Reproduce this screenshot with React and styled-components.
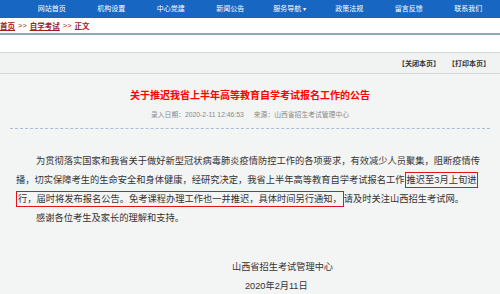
import React from "react";
import styled, { createGlobalStyle } from "styled-components";

const GlobalStyle = createGlobalStyle`
  html, body {
    margin: 0;
    padding: 0;
    background: #f3f4f4;
  }
  body {
    font-family: "Liberation Sans", "Noto Sans CJK SC", sans-serif;
    overflow: hidden;
  }
`;

const navItems = ["网站首页", "机构设置", "中心党建", "新闻公告", "服务导航", "政策法规", "留言反馈", "联系我们"];

const App = () => {
  return (
    <Page>
      <GlobalStyle />
      <Top>
        <Nav>
          {navItems.map((item) => (
            <NavItem key={item}>
              {item}
              {item === "服务导航" && <Caret>▾</Caret>}
            </NavItem>
          ))}
        </Nav>
        <Crumbs>
          <CrumbLink>首页</CrumbLink>
          <Sep>&gt;&gt;</Sep>
          <CrumbLink>自学考试</CrumbLink>
          <Sep>&gt;&gt;</Sep>
          <span>正文</span>
        </Crumbs>
      </Top>
      <Toolbar>
        <ToolBtn>【关闭本页】</ToolBtn>
        <ToolBtn>【打印本页】</ToolBtn>
      </Toolbar>
      <Article>
        <Title>关于推迟我省上半年高等教育自学考试报名工作的公告</Title>
        <Meta>
          录入日期：2020-2-11 12:46:53
          <MetaSource>来源：山西省招生考试管理中心</MetaSource>
        </Meta>
        <Divider />
        <Body>
          <Line $indent>为贯彻落实国家和我省关于做好新型冠状病毒肺炎疫情防控工作的各项要求，有效减少人员聚集，阻断疫情传</Line>
          <Line>
            播，切实保障考生的生命安全和身体健康，经研究决定，我省上半年高等教育自学考试报名工作<Mark>推迟至3月上旬进</Mark>
          </Line>
          <Line>
            <Mark>行，届时将发布报名公告。免考课程办理工作也一并推迟，具体时间另行通知，</Mark>请及时关注山西招生考试网。
          </Line>
          <Line $indent>感谢各位考生及家长的理解和支持。</Line>
        </Body>
        <Sign>
          <SignLine $offset={232}>山西省招生考试管理中心</SignLine>
          <SignLine $offset={245}>2020年2月11日</SignLine>
        </Sign>
      </Article>
    </Page>
  );
};

export default App;

const Page = styled.div`
  width: 500px;
  height: 294px;
  overflow: hidden;
  background: #f3f4f4;
`;

const Top = styled.div`
  background: #ffffff;
  padding-bottom: 17px;
`;

const Nav = styled.div`
  height: 18px;
  background: #1766c2;
  display: flex;
  align-items: center;
  padding-left: 22px;
`;

const NavItem = styled.div`
  width: 59.5px;
  text-align: center;
  color: #ffffff;
  font-size: 7px;
  line-height: 18px;
  white-space: nowrap;
`;

const Caret = styled.span`
  margin-left: 2px;
  font-size: 6px;
`;

const Crumbs = styled.div`
  height: 15px;
  border-bottom: 2px solid #8ea8b6;
  display: flex;
  align-items: center;
  padding-left: 0;
  font-size: 7.5px;
  font-weight: bold;
  color: #a0201c;
  white-space: nowrap;
`;

const CrumbLink = styled.span`
  text-decoration: underline;
`;

const Sep = styled.span`
  margin: 0 3px;
  font-weight: normal;
`;

const Toolbar = styled.div`
  height: 20px;
  border-top: 1px solid #d6d9d9;
  border-bottom: 1px solid #d6d9d9;
  background: #f1f2f2;
  display: flex;
  justify-content: flex-end;
  align-items: center;
  gap: 8px;
  padding-right: 10px;
`;

const ToolBtn = styled.span`
  font-size: 7px;
  font-weight: bold;
  color: #333333;
`;

const Article = styled.div`
  padding: 0 10px;
`;

const Title = styled.h1`
  margin: 15px 0 0;
  text-align: center;
  font-size: 10px;
  line-height: 14px;
  font-weight: bold;
  color: #ff0000;
  white-space: nowrap;
`;

const Meta = styled.div`
  margin-top: 7px;
  text-align: center;
  font-size: 6.8px;
  line-height: 10px;
  color: #8a8a8a;
  white-space: nowrap;
`;

const MetaSource = styled.span`
  margin-left: 10px;
`;

const Divider = styled.div`
  margin-top: 8px;
  border-top: 1px dashed #a9bfd6;
`;

const Body = styled.div`
  margin-top: 23px;
  padding-left: 6px;
  font-size: 9.25px;
  line-height: 19px;
  color: #333333;
`;

const Line = styled.div`
  white-space: nowrap;
  padding-left: ${(p) => (p.$indent ? "20px" : "0")};
`;

const Mark = styled.span`
  border: 1px solid #e3131b;
  padding: 2px 1px;
`;

const Sign = styled.div`
  margin-top: 30px;
  font-size: 9.2px;
  line-height: 19px;
  color: #333333;
`;

const SignLine = styled.div`
  padding-left: ${(p) => p.$offset - 10}px;
  white-space: nowrap;
`;
